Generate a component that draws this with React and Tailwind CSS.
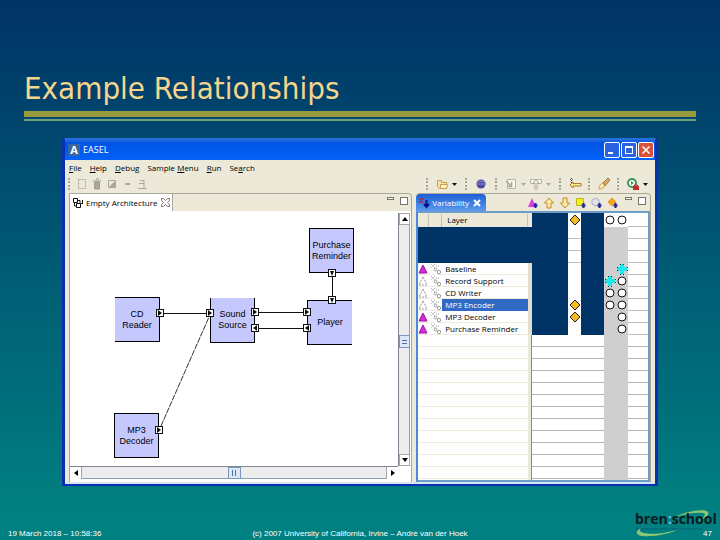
const NODES = [
  { id: "cd", label: ["CD", "Reader"], place: "left-[45px] top-[84px] border-l-0" },
  { id: "sound", label: ["Sound", "Source"], place: "left-[140px] top-[85px] border-t-0" },
  { id: "player", label: ["Player"], place: "left-[237px] top-[87px] border-r-0" },
  { id: "purchase", label: ["Purchase", "Reminder"], place: "left-[239px] top-[15px]" },
  { id: "mp3", label: ["MP3", "Decoder"], place: "left-[44px] top-[200px]" },
];

const PORTS = [
  { x: 90, y: 100, dir: "right" },
  { x: 140, y: 100, dir: "right" },
  { x: 185, y: 99, dir: "right" },
  { x: 185, y: 115, dir: "left" },
  { x: 237, y: 99, dir: "right" },
  { x: 237, y: 115, dir: "left" },
  { x: 262, y: 60, dir: "down" },
  { x: 262, y: 87, dir: "down" },
  { x: 89, y: 217, dir: "right" },
];

const ARROWS = {
  right: "M-2 -3 L2 0 L-2 3 Z",
  left: "M2 -3 L-2 0 L2 3 Z",
  down: "M-2 -2 L2 -2 L0 3 Z",
};

const MENUS = [
  { name: "File", key: 0 },
  { name: "Help", key: 0 },
  { name: "Debug", key: 0 },
  { name: "Sample Menu", key: 7 },
  { name: "Run", key: 0 },
  { name: "Search", key: 2 },
];

const LAYERS = [
  { name: "Baseline", on: true, marks: [null, null, "plus"] },
  { name: "Record Support", on: false, marks: [null, "plus", "circle"] },
  { name: "CD Writer", on: false, marks: [null, "circle", "circle"] },
  { name: "MP3 Encoder", on: false, selected: true, marks: ["diamond", "circle", "circle"] },
  { name: "MP3 Decoder", on: true, marks: ["diamond", null, "circle"] },
  { name: "Purchase Reminder", on: true, marks: [null, null, "circle"] },
];

function Mark({ type }) {
  if (!type) return null;
  return (
    <svg viewBox="0 0 12 12" className="mx-auto block size-3 overflow-visible">
      {type === "circle" && <circle cx="6" cy="6" r="4" fill="#fff" stroke="#111" />}
      {type === "diamond" && (
        <path d="M6 1 L11 6 L6 11 L1 6 Z" fill="#f5b921" stroke="#222" />
      )}
      {type === "plus" && (
        <g shapeRendering="crispEdges">
          <path d="M4 1h4v3h3v4H8v3H4V8H1V4h3z" fill="#1de9ee" />
          <path d="M4 1h1M7 1h1M4 11h1M7 11h1M1 4v1M1 7v1M11 4v1M11 7v1" stroke="#134" />
        </g>
      )}
    </svg>
  );
}

function TriangleIcon({ on }) {
  return (
    <svg viewBox="0 0 10 10" className="size-[10px]">
      <path
        d="M5 1 L9 9 L1 9 Z"
        fill={on ? "#d62bd6" : "#fff"}
        stroke={on ? "#a010a8" : "#9a9a9a"}
        strokeDasharray={on ? undefined : "2 1"}
      />
    </svg>
  );
}

function LinkIcon() {
  return (
    <svg viewBox="0 0 12 12" className="size-3" fill="none" stroke="#9b9b9b">
      <path d="M1 1l4 4M5 1L1 5M6 3h3" strokeDasharray="1 1" />
      <circle cx="5.500" cy="6.500" r="1.500" />
      <circle cx="9" cy="9" r="1.700" />
    </svg>
  );
}

function Grip({ className = "" }) {
  return <span className={`h-3 border-l-2 border-dotted border-[#aca899] ${className}`} />;
}

function Caret({ muted }) {
  return (
    <svg viewBox="0 0 5 3" className="h-[3px] w-[5px]">
      <path d="M0 0h5L2.500 3z" fill={muted ? "#aca899" : "#111"} />
    </svg>
  );
}

function IconButton({ label, children }) {
  return (
    <button type="button" aria-label={label} className="block size-3 shrink-0">
      <svg viewBox="0 0 12 12" className="size-3 overflow-visible" fill="none">
        {children}
      </svg>
    </button>
  );
}

function ViewButtons() {
  return (
    <div className="flex gap-[6px]">
      <button
        type="button"
        aria-label="Minimize view"
        className="h-[3px] w-[7px] border border-[#77756a] bg-white"
      />
      <button
        type="button"
        aria-label="Maximize view"
        className="size-2 border border-[#77756a] bg-white"
      />
    </div>
  );
}

function TitleBar() {
  return (
    <header className="flex h-[22px] items-center bg-linear-to-b from-[#2a72dc] via-[#0054e3] via-25% to-[#0462fb] pt-px pr-px pl-[3px] text-white">
      <span className="mr-[3px] flex size-3 items-center justify-center bg-[#3a66a0] text-[11px] leading-3 font-bold">
        A
      </span>
      <h2 className="flex-1 text-[9px]">EASEL</h2>
      <div className="flex gap-px">
        <button
          type="button"
          aria-label="Minimize"
          className="flex size-4 items-end rounded-xs border border-white bg-[#2a62e2] p-[3px]"
        >
          <span className="h-[2px] w-[5px] bg-white" />
        </button>
        <button
          type="button"
          aria-label="Maximize"
          className="flex size-4 items-center justify-center rounded-xs border border-white bg-[#2a62e2]"
        >
          <span className="size-2 border border-t-2 border-white" />
        </button>
        <button
          type="button"
          aria-label="Close"
          className="flex size-4 items-center justify-center rounded-xs border border-white bg-[#d95338]"
        >
          <svg viewBox="0 0 8 8" className="size-2" stroke="#fff" strokeWidth="1.500">
            <path d="M0.500 0.500l7 7M7.500 0.500l-7 7" />
          </svg>
        </button>
      </div>
    </header>
  );
}

function Menu() {
  return (
    <nav className="flex h-[15px] items-center gap-2 pl-1 text-[8px]">
      {MENUS.map(({ name, key }) => (
        <button key={name} type="button" className="whitespace-pre">
          {name.slice(0, key)}
          <u>{name[key]}</u>
          {name.slice(key + 1)}
        </button>
      ))}
    </nav>
  );
}

function Toolbar() {
  return (
    <div className="flex h-[18px] items-center justify-between pr-[7px] pl-[3px]">
      <div className="flex items-center gap-[3px]">
        <Grip className="mr-[3px]" />
        <IconButton label="Select">
          <path d="M2.500 1.500h7v9h-7z" stroke="#aca899" strokeDasharray="2 1" />
        </IconButton>
        <IconButton label="Delete">
          <path d="M2 3h8M5 1h3M3.500 4h5v7h-5z" stroke="#9f9c8e" fill="#aca899" />
        </IconButton>
        <IconButton label="Shade">
          <path d="M2.500 2.500h7v7h-7z" stroke="#aca899" />
          <path d="M9 3v6H3z" fill="#aca899" />
        </IconButton>
        <IconButton label="Line">
          <path d="M4 6h5" stroke="#aca899" strokeWidth="2" />
        </IconButton>
        <IconButton label="Anchor">
          <path d="M4 2.500h4v8M3 5.500h5M2 10.500h9" stroke="#aca899" />
        </IconButton>
      </div>
      <div className="flex items-center">
        <Grip />
        <div className="mx-2 flex items-center gap-1">
          <IconButton label="Open">
            <path d="M1.500 2.500h4v2h5v6h-7l-2-2z" fill="#f7e1ae" stroke="#c99b4b" />
            <path d="M4.500 6.500h7l-1 4h-6z" fill="#fff3d0" stroke="#c99b4b" />
          </IconButton>
          <Caret />
        </div>
        <Grip />
        <div className="mx-2">
          <IconButton label="Web">
            <circle cx="6" cy="6" r="4.500" fill="#4b4a9c" />
            <path d="M1 6h10M3 4q3-2 6 0" stroke="#8f90cf" />
          </IconButton>
        </div>
        <Grip />
        <div className="mx-2 flex items-center gap-1">
          <IconButton label="Next annotation">
            <path d="M2.500 1.500h8v9h-8z" stroke="#b8b5a5" fill="#f7f5ec" />
            <path d="M1 3l5 5M6.500 4v4.500H3" stroke="#aca899" strokeWidth="1.500" />
          </IconButton>
          <Caret muted />
          <IconButton label="Previous annotation">
            <path d="M0.500 1.500h11v4h-11z" stroke="#b8b5a5" fill="#f7f5ec" />
            <path d="M6 2l3 3H7v6H5V5H3z" stroke="#aca899" fill="#f7f5ec" />
          </IconButton>
          <Caret muted />
        </div>
        <Grip />
        <div className="mr-[7px] ml-2">
          <IconButton label="Back">
            <path d="M4 4L1 7l3 3V8h8V5.500H4z" fill="#ffe7a0" stroke="#b17d22" />
            <path d="M1 1l3 3M4 1L1 4M2.500 0v5" stroke="#444" strokeDasharray="1 1" />
          </IconButton>
        </div>
        <Grip />
        <div className="mr-[7px] ml-2">
          <IconButton label="Search">
            <path d="M1 11l1-4 4-3 2 2-3 4z" fill="#fff1b8" stroke="#d5a34c" />
            <path d="M5 5l5-5 2 2-5 6z" fill="#d9ab6c" stroke="#a7763b" />
          </IconButton>
        </div>
        <Grip />
        <div className="ml-2 flex items-center gap-1">
          <IconButton label="Run external tool">
            <circle cx="5" cy="5" r="4" fill="#fff" stroke="#3d9658" strokeWidth="2" />
            <path d="M4 3l3 2-3 2z" fill="#3d9658" />
            <path d="M6 8h6v4H6z" fill="#bd2f2f" />
            <path d="M7.500 8V7h3v1" stroke="#bd2f2f" />
          </IconButton>
          <Caret />
        </div>
      </div>
    </div>
  );
}

function Diagram() {
  return (
    <div className="relative min-h-60 flex-1 overflow-hidden bg-white font-['Liberation_Sans',sans-serif]">
      {NODES.map((node) => (
        <div
          key={node.id}
          className={`absolute flex size-[45px] items-center justify-center border border-black bg-[#c5c8fd] text-center text-[9px] leading-[11px] text-black ${node.place}`}
        >
          <span>
            {node.label.map((line) => (
              <span key={line} className="block">
                {line}
              </span>
            ))}
          </span>
        </div>
      ))}
      <svg className="absolute inset-0 size-full" aria-hidden="true">
        <g stroke="#111" shapeRendering="crispEdges">
          <path d="M93 100.500H137M188 99.500H234M188 115.500H234M262.500 63V84" />
        </g>
        <path d="M91 213L139 104" stroke="#333" strokeDasharray="6 1" />
        {PORTS.map(({ x, y, dir }) => (
          <g key={`${x}-${y}`} transform={`translate(${x} ${y})`}>
            <rect x="-3.500" y="-3.500" width="7" height="7" fill="#fff" stroke="#111" />
            <path d={ARROWS[dir]} fill="#111" />
          </g>
        ))}
      </svg>
    </div>
  );
}

function VerticalScroll() {
  return (
    <div className="flex w-3 flex-col border-l border-[#7e8794] bg-[#ededed]">
      <button
        type="button"
        aria-label="Scroll up"
        className="flex h-3 items-center justify-center border border-[#a5a7ad] bg-white"
      >
        <svg viewBox="0 0 6 4" className="h-1 w-[6px]">
          <path d="M0 4h6L3 0z" />
        </svg>
      </button>
      <div className="flex-1 border-r border-[#8aa0c0]" />
      <span className="flex h-[13px] flex-col justify-center gap-[2px] border border-[#7d95bd] bg-[#dce7f7] px-[2px]">
        <i className="h-px bg-[#52729f]" />
        <i className="h-px bg-[#52729f]" />
      </span>
      <div className="h-[106px] border-r border-[#8aa0c0]" />
      <button
        type="button"
        aria-label="Scroll down"
        className="flex h-3 items-center justify-center border border-[#a5a7ad] bg-white"
      >
        <svg viewBox="0 0 6 4" className="h-1 w-[6px]">
          <path d="M0 0h6L3 4z" />
        </svg>
      </button>
    </div>
  );
}

function HorizontalScroll() {
  return (
    <div className="mr-3 flex h-[13px] border-t border-[#7e8794] bg-[#ededed]">
      <button
        type="button"
        aria-label="Scroll left"
        className="flex w-3 items-center justify-center border-r border-[#a5a7ad] bg-white"
      >
        <svg viewBox="0 0 4 6" className="h-[6px] w-1">
          <path d="M4 0v6L0 3z" />
        </svg>
      </button>
      <div className="flex-1 border-b border-[#8aa0c0]" />
      <span className="flex w-[13px] justify-center gap-[2px] border border-[#7d95bd] bg-[#dce7f7] py-[2px]">
        <i className="w-px bg-[#52729f]" />
        <i className="w-px bg-[#52729f]" />
      </span>
      <div className="flex-1 border-b border-[#8aa0c0]" />
      <button
        type="button"
        aria-label="Scroll right"
        className="flex w-3 items-center justify-center border-l border-[#a5a7ad] bg-white"
      >
        <svg viewBox="0 0 4 6" className="h-[6px] w-1">
          <path d="M0 0v6L4 3z" />
        </svg>
      </button>
    </div>
  );
}

function ArchitecturePane() {
  return (
    <section className="flex min-w-0 flex-[343] flex-col rounded-tr-sm border border-b-0 border-[#aca899] bg-[#ece9d8]">
      <div className="flex h-[17px] items-start justify-between pr-[3px]">
        <div className="flex h-full items-center gap-[2px] border-r border-[#aca899] bg-white px-[2px] text-[8px]">
          <svg viewBox="0 0 12 12" className="size-3" fill="none" stroke="#111">
            <path d="M1.500 1.500h4v4h-4zM4.500 6.500h4v4h-4zM10.500 3v4M9 6.500h2M5 3.500h3v3M2.500 6v3H4" />
          </svg>
          <h3>Empty Architecture</h3>
          <button type="button" aria-label="Close Empty Architecture" className="ml-[2px]">
            <svg viewBox="0 0 9 9" className="size-[9px]" fill="none" stroke="#77756a">
              <path d="M0.500 0.500h2l2 2 2-2h2v2l-2 2 2 2v2h-2l-2-2-2 2h-2v-2l2-2-2-2z" />
            </svg>
          </button>
        </div>
        <div className="mt-[3px]">
          <ViewButtons />
        </div>
      </div>
      <div className="flex flex-1 flex-col bg-white pt-[2px] pr-px pb-[3px]">
        <div className="flex flex-1">
          <Diagram />
          <VerticalScroll />
        </div>
        <HorizontalScroll />
      </div>
    </section>
  );
}

function LayerTable() {
  return (
    <table className="w-full table-fixed border-separate border-spacing-0 text-[8px] leading-3">
      <colgroup>
        <col className="w-6" />
        <col className="w-[90px]" />
        <col className="w-9" />
        <col className="w-[13px]" />
        <col className="w-[23px]" />
        <col className="w-3" />
        <col className="w-3" />
        <col />
      </colgroup>
      <thead>
        <tr className="h-[14px]">
          <th className="bg-[#ece9d8] p-0" aria-label="Icons">
            <span className="ml-[10px] block h-[13px] border-x border-[#c5c2b2]" />
          </th>
          <th className="border-r-4 border-[#ece9d8] bg-[#ece9d8] p-0 text-left font-normal">
            <span className="block border-r border-[#c5c2b2] pl-[5px]">Layer</span>
          </th>
          <td className="bg-[#003366]" />
          <td className="bg-white p-0">
            <Mark type="diamond" />
          </td>
          <td className="bg-[#003366]" />
          <td className="bg-white p-0">
            <Mark type="circle" />
          </td>
          <td className="bg-white p-0">
            <Mark type="circle" />
          </td>
          <td className="border-b border-[#bdbdbd] bg-white" />
        </tr>
      </thead>
      <tbody>
        {["a", "b", "c"].map((row) => (
          <tr key={row} className="h-3">
            <td colSpan={3} className="bg-[#003366]" />
            <td className="border-b border-[#bdbdbd] bg-white" />
            <td className="bg-[#003366]" />
            <td colSpan={2} className="bg-[#cfcfcf]" />
            <td className="border-b border-[#bdbdbd] bg-white" />
          </tr>
        ))}
        {LAYERS.map((layer) => (
          <tr key={layer.name} className="h-3">
            <td className="border-b border-[#efebdc] bg-white p-0">
              <span className="flex h-[11px] items-center gap-[2px]">
                <TriangleIcon on={layer.on} />
                <LinkIcon />
              </span>
            </td>
            <td className="border-r-4 border-[#e2dfd0] bg-white p-0">
              <span
                className={`block h-3 overflow-hidden pl-[3px] leading-3 whitespace-nowrap ${
                  layer.selected ? "bg-[#316ac5] text-white" : "border-b border-[#efebdc]"
                }`}
              >
                {layer.name}
              </span>
            </td>
            <td className="bg-[#003366]" />
            <td className="bg-white p-0">
              <Mark type={layer.marks[0]} />
            </td>
            <td className="bg-[#003366]" />
            <td className="bg-[#cfcfcf] p-0">
              <Mark type={layer.marks[1]} />
            </td>
            <td className="bg-[#cfcfcf] p-0">
              <Mark type={layer.marks[2]} />
            </td>
            <td className="border-b border-[#bdbdbd] bg-white" />
          </tr>
        ))}
      </tbody>
    </table>
  );
}

// Empty ruled area under the last layer
function BlankRows() {
  return (
    <div className="flex flex-1">
      <div className="w-[110px] bg-[repeating-linear-gradient(to_bottom,#fff_0_11px,#efebdc_11px_12px)]" />
      <div className="w-1 border-r border-[#888] bg-[#ece9d8]" />
      <div className="w-[72px] bg-[repeating-linear-gradient(to_bottom,#fff_0_11px,#b4b4b4_11px_12px)]" />
      <div className="w-6 bg-[#cfcfcf]" />
      <div className="flex-1 bg-[repeating-linear-gradient(to_bottom,#fff_0_11px,#b4b4b4_11px_12px)]" />
    </div>
  );
}

function VariabilityPane() {
  return (
    <section className="flex min-w-0 flex-[235] flex-col rounded-t-sm border-t border-r border-[#aca899] bg-[#ece9d8]">
      <div className="flex h-[17px] items-center justify-between pr-1">
        <div className="flex h-full items-center gap-[2px] rounded-t-sm bg-linear-to-b from-[#1c5fd4] to-[#5b99ee] pr-[5px] pl-[2px] text-[8px] text-white">
          <svg viewBox="0 0 12 12" className="size-3" fill="none">
            <path d="M1 2h5M1 5h4M2 1l3 5M5 1L2 6" stroke="#b0204c" />
            <path d="M8.500 3v6M6 7l2.500 3L11 7" stroke="#06157e" strokeWidth="2" />
          </svg>
          <h3>Variability</h3>
          <button type="button" aria-label="Close Variability" className="ml-[2px]">
            <svg viewBox="0 0 8 8" className="size-2" stroke="#fff" strokeWidth="2">
              <path d="M1 1l6 6M7 1L1 7" />
            </svg>
          </button>
        </div>
        <div className="flex items-center gap-1">
          <IconButton label="Add layer">
            <path d="M5 1l4 9H1z" fill="#e23be2" />
            <path d="M8.500 6v5M6.500 8.500h4" stroke="#23239b" strokeWidth="2" />
          </IconButton>
          <IconButton label="Move up">
            <path d="M6 1l4.500 5H8v5H4V6H1.500z" fill="#ffe9a8" stroke="#c08a22" />
          </IconButton>
          <IconButton label="Move down">
            <path d="M6 11l4.500-5H8V1H4v5H1.500z" fill="#ffe9a8" stroke="#c08a22" />
          </IconButton>
          <IconButton label="Add required relationship">
            <path d="M1.500 1.500h7v7h-7z" fill="#f4ee1b" stroke="#b9b420" />
            <path d="M8.500 6v5M6.500 8.500h4" stroke="#23239b" strokeWidth="2" />
          </IconButton>
          <IconButton label="Add optional relationship">
            <path d="M5 1l3 2v4L5 9 1 7V3z" fill="#dfe3ee" stroke="#a9adc0" />
            <path d="M8.500 6v5M6.500 8.500h4" stroke="#23239b" strokeWidth="2" />
          </IconButton>
          <IconButton label="Add variant relationship">
            <path d="M5 1l4 4-4 4-4-4z" fill="#f7a81c" stroke="#e09a20" />
            <path d="M8.500 6v5M6.500 8.500h4" stroke="#23239b" strokeWidth="2" />
          </IconButton>
          <div className="-mt-1 ml-[2px]">
            <ViewButtons />
          </div>
        </div>
      </div>
      <div className="flex flex-1 flex-col border-2 border-[#6c9cc8] border-l-[#4c88e0] bg-white">
        <LayerTable />
        <BlankRows />
      </div>
    </section>
  );
}

function SchoolLogo() {
  return (
    <svg
      viewBox="0 0 84 32"
      className="absolute right-[2px] bottom-0 h-8 w-[84px]"
      role="img"
      aria-label="bren:school"
    >
      <path
        d="M38 10C52 3 71 0 74 4C76 7 70 11 62 15C71 9 73 6 69 5C61 4 50 6 38 10Z"
        fill="#8cc873"
      />
      <path
        d="M8 19C1 23 1 27 8 28C20 29 36 26 48 20C36 25 18 27 10 25C5 24 5 22 8 19Z"
        fill="#8cc873"
      />
      <text x="1" y="16" fontSize="14" fontWeight="700" fill="#0b1a20">
        bren<tspan fill="#6cc0f5">:</tspan>school
      </text>
      <text x="2" y="22" fontSize="4" fill="#074a78">
        information and computer sciences
      </text>
    </svg>
  );
}

export default function App() {
  return (
    <div className="flex min-h-screen flex-col bg-linear-to-b from-[#003366] to-[#008080] to-95% font-['Open_Sans',sans-serif]">
      <h1 className="px-6 pt-[67px] pb-[2px] font-['DejaVu_Sans_Condensed','Open_Sans',sans-serif] text-[31px] leading-[42px] text-[#f3d58b]">
        Example Relationships
      </h1>
      <main className="flex flex-1 flex-col px-6">
        <div className="h-[6px] bg-[#989a3e]" />
        <div className="mt-[2px] h-[2px] bg-[#6f9f74]" />
        <div className="mx-[38px] mt-[17px] flex flex-1 flex-col overflow-hidden rounded-t border-x-3 border-b-2 border-[#0a2fb4] bg-[#ece9d8] text-black">
          <TitleBar />
          <Menu />
          <Toolbar />
          <div className="flex flex-1 gap-1 border-b-2 border-[#d6e6f0] px-1">
            <ArchitecturePane />
            <VariabilityPane />
          </div>
        </div>
      </main>
      <footer className="relative grid h-[54px] grid-cols-[1fr_auto_1fr] items-end px-2 font-['Liberation_Sans',sans-serif] text-[8px] leading-3 text-white">
        <div className="font-['Open_Sans',sans-serif]">
          <SchoolLogo />
        </div>
        <span className="col-start-1">19 March 2018 – 10:58:36</span>
        <span>(c) 2007 University of California, Irvine – André van der Hoek</span>
        <span className="relative text-right">47</span>
      </footer>
    </div>
  );
}
